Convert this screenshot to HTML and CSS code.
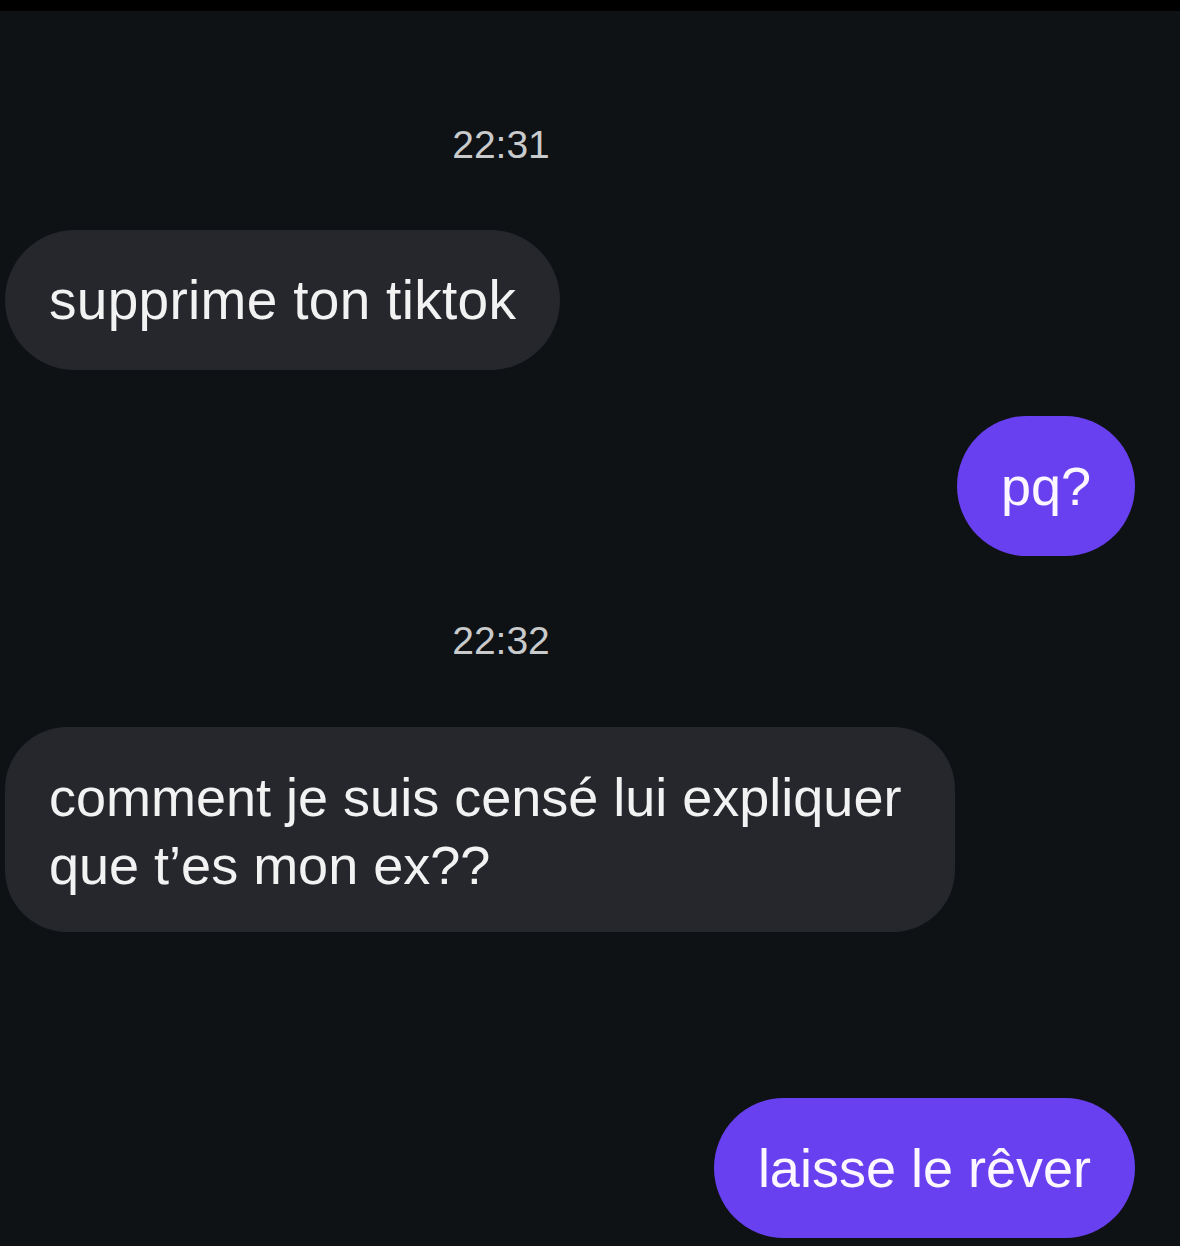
FILE: index.html
```html
<!DOCTYPE html>
<html lang="fr">
<head>
  <meta charset="UTF-8">
  <meta name="viewport" content="width=device-width, initial-scale=1.0">
  <title>Messages</title>
  <link rel="stylesheet" href="styles.css">
</head>
<body>
  <div class="topbar"></div>

  <div class="chat">
    <div class="time t1">22:31</div>
    <div class="row left">
      <div class="bubble in first">supprime ton tiktok</div>
    </div>
    <div class="row right r2">
      <div class="bubble out">pq?</div>
    </div>

    <div class="time t2">22:32</div>
    <div class="row left">
      <div class="bubble in wide">comment je suis censé lui expliquer que t’es mon ex??</div>
    </div>
    <div class="row right r4">
      <div class="bubble out">laisse le rêver</div>
    </div>
  </div>
</body>
</html>
```

FILE: styles.css
```css
html, body {
  margin: 0;
  padding: 0;
}

body {
  background-color: #0e1215;
  font-family: "Liberation Sans", Arial, sans-serif;
  height: 1246px;
  overflow: hidden;
}

.topbar {
  height: 11px;
  background-color: #000;
}

.chat {
  display: flex;
  flex-direction: column;
  padding: 0 45px 0 5px;
}

.time {
  text-align: center;
  color: #c9cacc;
  font-size: 39px;
  line-height: 46px;
  padding-right: 138px;
}

.t1 {
  margin-top: 111px;
  margin-bottom: 62px;
}

.t2 {
  margin-top: 62px;
  margin-bottom: 63px;
}

.row {
  display: flex;
}

.row.left {
  justify-content: flex-start;
}

.row.right {
  justify-content: flex-end;
}

.r2 {
  margin-top: 46px;
}

.r4 {
  margin-top: 166px;
}

.bubble {
  font-size: 54px;
  line-height: 68px;
  padding: 36px 44px;
  border-radius: 70px;
  color: #f2f2f3;
}

.bubble.in {
  background-color: #25272d;
}

.bubble.first {
  font-size: 55px;
  letter-spacing: 0.3px;
}

.bubble.out {
  background-color: #6940f0;
  color: #fbf6ff;
}

.bubble.wide {
  max-width: 862px;
  padding-bottom: 33px;
  border-radius: 62px;
}
```
